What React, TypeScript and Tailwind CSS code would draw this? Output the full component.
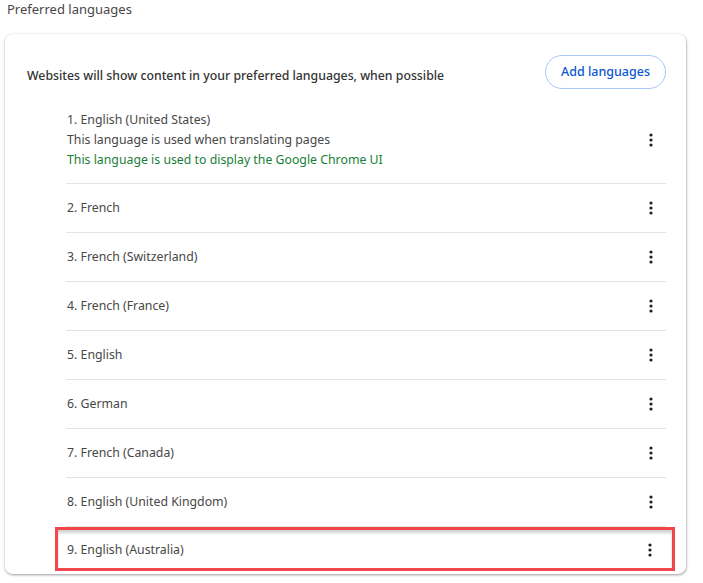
const languages = [
  'French',
  'French (Switzerland)',
  'French (France)',
  'English',
  'German',
  'French (Canada)',
  'English (United Kingdom)',
];

function Kebab() {
  return (
    <svg width="4" height="14" viewBox="0 0 4 14" className="text-[#1f1f1f]">
      <circle cx="2" cy="2" r="1.6" fill="currentColor" />
      <circle cx="2" cy="7" r="1.6" fill="currentColor" />
      <circle cx="2" cy="12" r="1.6" fill="currentColor" />
    </svg>
  );
}

export default function App() {
  return (
    <div className="min-h-[583px] w-[703px] bg-white font-['Noto_Sans',sans-serif] text-[12.3px] text-[#474747]">
      <div className="pl-[7px] pt-[1px] text-[13px] leading-[17px]">Preferred languages</div>
      <div className="ml-[5px] mt-[16px] w-[681px] rounded-[8px] bg-white pb-[3px] shadow-[0_1px_3px_rgba(0,0,0,0.3),1px_1px_2px_rgba(0,0,0,0.12)]">
        <div className="flex items-center justify-between pl-[22px] pr-[20px] pt-[21px]">
          <div className="mt-[9px] font-medium text-[#333]">
            Websites will show content in your preferred languages, when possible
          </div>
          <button
            type="button"
            className="h-[34px] w-[121px] rounded-full border border-[#a8c7fa] text-[12.5px] font-medium text-[#0b57d0]"
          >
            Add languages
          </button>
        </div>
        <div className="ml-[61px] mr-[20px] mt-[21px]">
          <div className="flex items-center justify-between border-b border-[#e3e3e3] pb-[13px] leading-[20px]">
            <div className="pl-[1px]">
              <div>1. English (United States)</div>
              <div>This language is used when translating pages</div>
              <div className="text-[#188038]">This language is used to display the Google Chrome UI</div>
            </div>
            <div className="mr-[13px]">
              <Kebab />
            </div>
          </div>
          {languages.map((name, i) => (
            <div
              key={name}
              className="flex h-[49px] items-center justify-between border-b border-[#e3e3e3] pl-[1px]"
            >
              <div>
                {i + 2}. {name}
              </div>
              <div className="mr-[13px]">
                <Kebab />
              </div>
            </div>
          ))}
        </div>
        <div className="ml-[50px] mr-[11px] flex h-[44px] items-center justify-between border-[3px] border-[#f0464c] pl-[9px] pt-[2px] shadow-[inset_0_3px_3px_rgba(0,0,0,0.18)]">
          <div>9. English (Australia)</div>
          <div className="mr-[20px]">
            <Kebab />
          </div>
        </div>
      </div>
    </div>
  );
}
